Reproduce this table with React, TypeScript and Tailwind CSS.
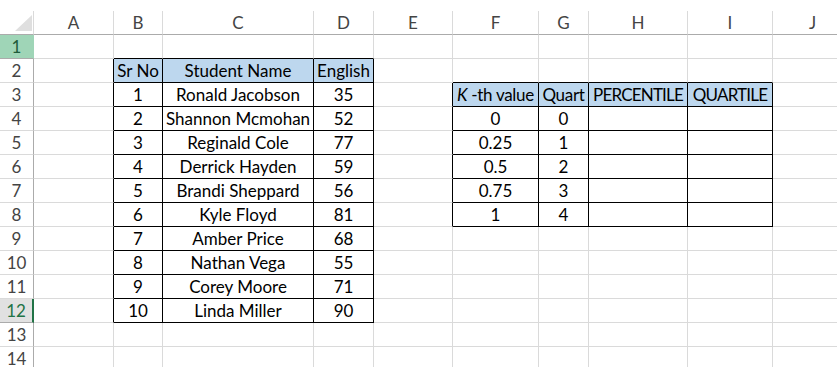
import React from "react";

const cols = ["A", "B", "C", "D", "E", "F", "G", "H", "I", "J"];
const widths = ["w-[80px]", "w-[49px]", "w-[151px]", "w-[60px]", "w-[79px]", "w-[86px]", "w-[50px]", "w-[99px]", "w-[85px]", "w-[80px]"];

const students = [
  ["Ronald Jacobson", "35"],
  ["Shannon Mcmohan", "52"],
  ["Reginald Cole", "77"],
  ["Derrick Hayden", "59"],
  ["Brandi Sheppard", "56"],
  ["Kyle Floyd", "81"],
  ["Amber Price", "68"],
  ["Nathan Vega", "55"],
  ["Corey Moore", "71"],
  ["Linda Miller", "90"],
];

const kth = [
  ["0", "0"],
  ["0.25", "1"],
  ["0.5", "2"],
  ["0.75", "3"],
  ["1", "4"],
];

// row index 1..14, col index 0..9 (A..J)
function content(r: number, c: number): React.ReactNode {
  if (r === 2) {
    if (c === 1) return "Sr No";
    if (c === 2) return "Student Name";
    if (c === 3) return "English";
  }
  if (r >= 3 && r <= 12) {
    const s = students[r - 3];
    if (c === 1) return String(r - 2);
    if (c === 2) return s[0];
    if (c === 3) return s[1];
  }
  if (r === 3) {
    if (c === 5)
      return (
        <span className="tracking-[-0.3px]">
          <i className="mr-[4px]">K</i>-th value
        </span>
      );
    if (c === 6) return <span className="tracking-[-0.3px]">Quart</span>;
    if (c === 7) return <span className="tracking-[-0.8px]">PERCENTILE</span>;
    if (c === 8) return <span className="tracking-[-0.8px]">QUARTILE</span>;
  }
  if (r >= 4 && r <= 8) {
    const k = kth[r - 4];
    if (c === 5) return k[0];
    if (c === 6) return k[1];
  }
  return null;
}

function inTable(r: number, c: number) {
  return (r >= 2 && r <= 12 && c >= 1 && c <= 3) || (r >= 3 && r <= 8 && c >= 5 && c <= 8);
}

function isHead(r: number, c: number) {
  return (r === 2 && c >= 1 && c <= 3) || (r === 3 && c >= 5 && c <= 8);
}

function Cell({ r, c }: { r: number; c: number }) {
  const rightBlack = inTable(r, c) || inTable(r, c + 1);
  const bottomBlack = inTable(r, c) || inTable(r + 1, c);
  return (
    <div
      className={[
        "h-[24px] shrink-0 border-r border-b flex items-center justify-center whitespace-nowrap text-black",
        widths[c],
        rightBlack ? "border-r-black" : "border-r-[#dadada]",
        bottomBlack ? "border-b-black" : "border-b-[#dadada]",
        isHead(r, c) ? "bg-[#bdd7ee]" : "bg-white",
      ].join(" ")}
    >
      {content(r, c)}
    </div>
  );
}

function RowHeader({ r }: { r: number }) {
  if (r === 1)
    return (
      <div className="w-[34px] h-[24px] shrink-0 border-r border-b border-r-[#9fd5b7] border-b-[#ababab] bg-[#9fd5b7] text-[#1f5c3a] flex items-center justify-center">
        {r}
      </div>
    );
  if (r === 12)
    return (
      <div className="w-[34px] h-[24px] shrink-0 border-r-2 border-b border-r-[#217346] border-b-[#ababab] bg-[#e1e1e1] text-[#217346] flex items-center justify-center">
        {r}
      </div>
    );
  return (
    <div className="w-[34px] h-[24px] shrink-0 border-r border-b border-r-[#ababab] border-b-[#dadada] bg-white text-[#444] flex items-center justify-center">
      {r}
    </div>
  );
}

export default function App() {
  const rows = Array.from({ length: 14 }, (_, i) => i + 1);
  return (
    <div className="w-[837px] h-[367px] overflow-hidden bg-white pt-[11px] text-[17px] font-['Lato',sans-serif] leading-none">
      <div className="flex">
        <div className="w-[34px] h-[24px] shrink-0 border-r border-b border-r-[#dadada] border-b-[#ababab] relative">
          <svg className="absolute left-[15px] top-[4px]" width="17" height="16" viewBox="0 0 17 16">
            <polygon points="17,0 17,16 0,16" fill="#dfdfdf" />
          </svg>
        </div>
        {cols.map((l, i) => (
          <div
            key={l}
            className={`${widths[i]} h-[24px] shrink-0 border-r border-b border-r-[#dadada] border-b-[#ababab] text-[#444] flex items-center justify-center`}
          >
            {l}
          </div>
        ))}
      </div>
      {rows.map((r) => (
        <div key={r} className="flex">
          <RowHeader r={r} />
          {cols.map((_, c) => (
            <Cell key={c} r={r} c={c} />
          ))}
        </div>
      ))}
    </div>
  );
}
